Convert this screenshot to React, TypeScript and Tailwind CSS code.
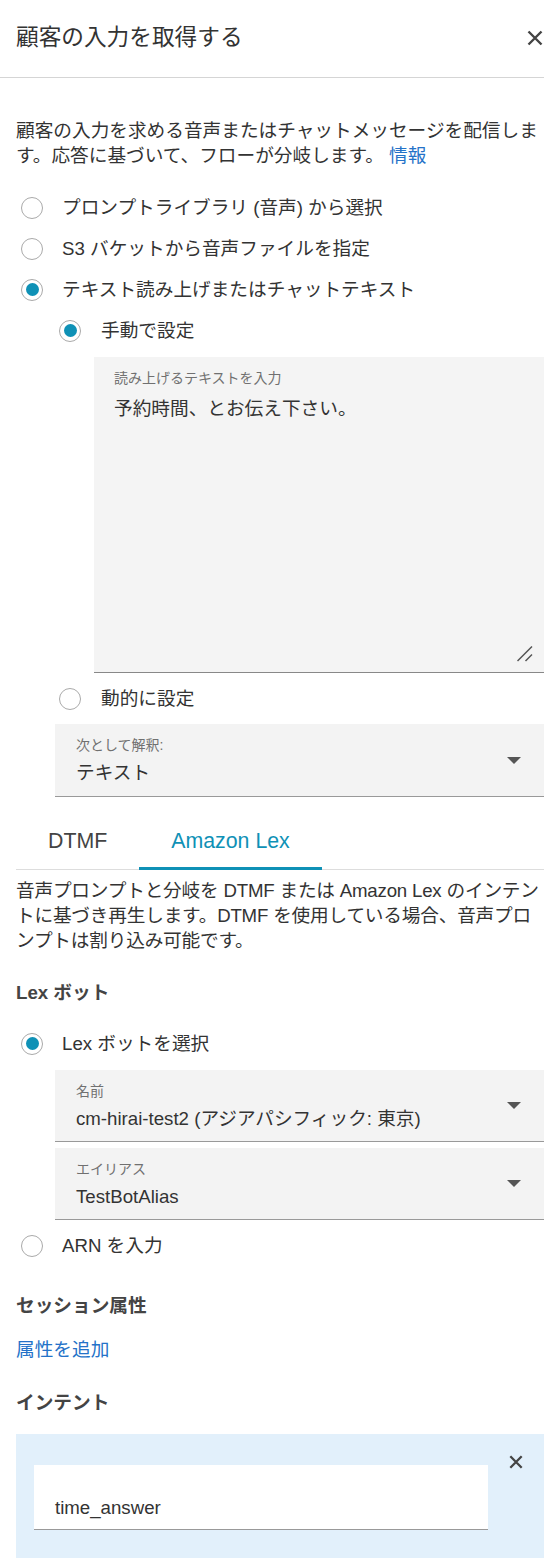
import clsx from 'clsx'

function CloseIcon({ size = 16, strokeWidth = 2.4 }: { size?: number; strokeWidth?: number }) {
  return (
    <svg width={size} height={size} viewBox="0 0 16 16" fill="none" stroke="#444" strokeWidth={strokeWidth}>
      <path d="M1.5 1.5l13 13M14.5 1.5l-13 13" />
    </svg>
  )
}

function Caret() {
  return (
    <svg width="14" height="7" viewBox="0 0 14 7">
      <path d="M0 0h14L7 7z" fill="#555" />
    </svg>
  )
}

function Radio({ label, checked, nested }: { label: string; checked?: boolean; nested?: boolean }) {
  return (
    <div className="flex h-[41px] items-center">
      <span
        className={clsx(
          'flex h-[22px] w-[22px] shrink-0 items-center justify-center rounded-full border border-[#aaa] bg-white',
          nested ? 'ml-[43px] mr-[20px]' : 'ml-[5px] mr-[19px]'
        )}
      >
        {checked && <span className="h-[13px] w-[13px] rounded-full bg-[#0f91b6]" />}
      </span>
      <span className="text-[18.67px] leading-[25px] text-[#333]">{label}</span>
    </div>
  )
}

function Select({ label, value, className }: { label: string; value: string; className?: string }) {
  return (
    <div
      className={clsx(
        'flex items-center justify-between border-b border-[#999] bg-[#f3f3f3] pl-[21px] pr-[23px]',
        className
      )}
    >
      <div>
        <div className="text-[14px] leading-[20px] text-[#707070]">{label}</div>
        <div className="mt-[5px] text-[18.67px] leading-[25px] text-[#333]">{value}</div>
      </div>
      <Caret />
    </div>
  )
}

export default function App() {
  return (
    <div className="h-[1558px] w-[544px] overflow-hidden bg-white font-['Liberation_Sans','Noto_Sans_CJK_JP',sans-serif] text-[#333]">
      {/* Header */}
      <header className="flex h-[78px] items-center justify-between border-b border-[#d5d5d5] pb-[3px] pl-4 pr-[1px]">
        <h1 className="text-[22.67px] leading-[30px] text-[#333]">顧客の入力を取得する</h1>
        <button className="mt-[2px]">
          <CloseIcon />
        </button>
      </header>

      <div className="pl-4">
        <p className="pt-10 text-[18.67px] leading-[25px]">
          顧客の入力を求める音声またはチャットメッセージを配信します。応答に基づいて、フローが分岐します。{' '}
          <a className="text-[#2472c8]">情報</a>
        </p>

        {/* Prompt source */}
        <div className="mt-[19px]">
          <Radio label="プロンプトライブラリ (音声) から選択" />
          <Radio label="S3 バケットから音声ファイルを指定" />
          <Radio label="テキスト読み上げまたはチャットテキスト" checked />
          <Radio label="手動で設定" checked nested />
        </div>

        <div className="relative ml-[78px] mt-[6px] h-[316px] border-b border-[#888] bg-[#f4f4f4] pl-5 pt-[11px]">
          <div className="text-[14px] leading-[20px] text-[#707070]">読み上げるテキストを入力</div>
          <div className="mt-2 text-[18.67px] leading-[25px]">予約時間、とお伝え下さい。</div>
          <svg className="absolute bottom-[10px] right-[11px]" width="16" height="16" viewBox="0 0 16 16" fill="none" stroke="#555" strokeWidth="1.5">
            <path d="M15 0.5L0.5 15M15 8.5L8.5 15" />
          </svg>
        </div>

        <div className="mt-[5px]">
          <Radio label="動的に設定" nested />
        </div>
        <Select label="次として解釈:" value="テキスト" className="ml-[39px] mt-[5px] h-[73px]" />

        {/* Tabs */}
        <div className="mt-[18px] flex border-b border-[#ddd]">
          <div className="flex h-[54px] items-center px-8 text-[21.33px] text-[#444]">DTMF</div>
          <div className="-mb-px flex h-[55px] items-center border-b-[3px] border-[#0f91b6] px-8 pt-[2px] text-[21.33px] text-[#0f91b6]">
            Amazon Lex
          </div>
        </div>

        <p className="mt-2 text-[18.67px] leading-[25px] tracking-[-0.2px]">
          音声プロンプトと分岐を DTMF または Amazon Lex のインテントに基づき再生します。DTMF を使用している場合、音声プロンプトは割り込み可能です。
        </p>

        <h2 className="mt-[27px] text-[18.67px] font-bold leading-[25px] text-[#444]">Lex ボット</h2>

        <div className="mt-[18px]">
          <Radio label="Lex ボットを選択" checked />
        </div>
        <Select label="名前" value="cm-hirai-test2 (アジアパシフィック: 東京)" className="ml-[39px] mt-[6px] h-[72px]" />
        <Select label="エイリアス" value="TestBotAlias" className="ml-[39px] mt-[6px] h-[72px]" />
        <div className="mt-[5px]">
          <Radio label="ARN を入力" />
        </div>

        <h2 className="mt-[27px] text-[18.67px] font-bold leading-[25px] text-[#444]">セッション属性</h2>
        <a className="mt-[19px] block text-[18.67px] leading-[25px] text-[#2472c8]">属性を追加</a>

        <h2 className="mt-[28px] text-[18.67px] font-bold leading-[25px] text-[#444]">インテント</h2>

        <div className="mt-[19px] flex h-[140px] items-start bg-[#e2f0fb] pl-[18px] pt-[31px]">
          <div className="h-[65px] w-[454px] border-b border-[#999] bg-white pl-[21px] pt-[30px] text-[18.67px] leading-[25px]">
            time_answer
          </div>
          <button className="-mt-[10px] ml-[21px]">
            <CloseIcon size={14} strokeWidth={2.6} />
          </button>
        </div>
      </div>
    </div>
  )
}
